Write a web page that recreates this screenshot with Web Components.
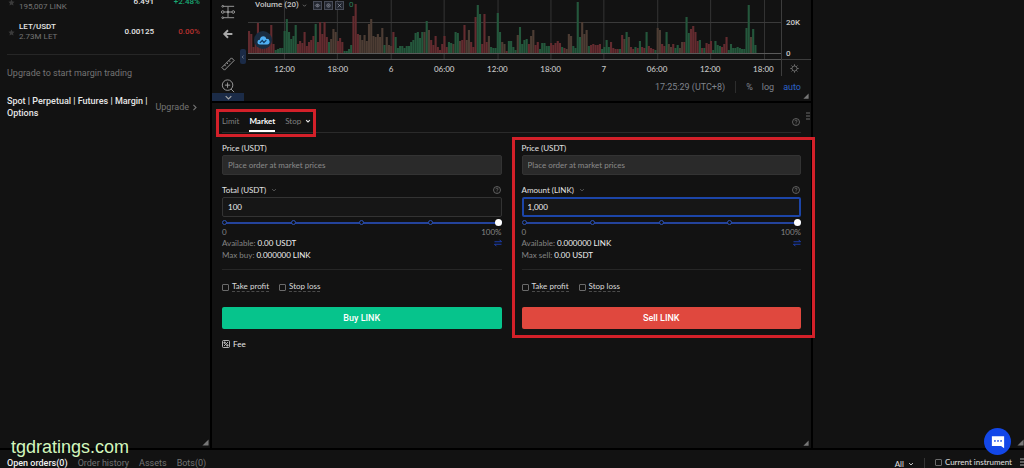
<!DOCTYPE html>
<html lang="en">
<head>
<meta charset="utf-8">
<title>LINK/USDT</title>
<style>
  body { margin: 0; background: #000; color: #e6e6e6; font-family: Roboto, "Liberation Sans", sans-serif; font-size: 8px; line-height: 12px; }
</style>
</head>
<body>
<trade-app></trade-app>
<script>
const define = (name, html, setup) => {
  const template = document.createElement('template');
  template.innerHTML = html;
  customElements.define(name, class extends HTMLElement {
    connectedCallback() {
      if (this.shadowRoot) return;
      const root = this.attachShadow({ mode: 'open' });
      root.append(template.content.cloneNode(true));
      if (setup) setup.call(this, root);
    }
  });
};

const icons = {
  star: '<path d="M8 1l2.200 4.600 5 .6-3.700 3.500 1 5L8 12.300 3.500 14.700l1-5L.8 6.200l5-.6z" fill="currentColor" stroke="none"/>',
  down: '<path d="M3 5.500l5 5 5-5"/>',
  right: '<path d="M5.500 2l6 6-6 6"/>',
  help: '<circle cx="8" cy="8" r="7"/><path d="M5.800 6.500c0-3 4.400-3 4.400-.3 0 1.600-2.200 1.600-2.200 3.300M8 11v1.600"/>',
  swap: '<path d="M1 5.500h14M11 1.500l4 4M15 10.500H1M5 14.500l-4-4"/>',
  fee: '<rect x="1" y="1" width="14" height="14" rx="2"/><path d="M4 4h2.500v2.500H4zM9.500 9.500H12V12H9.500zM12 4L4 12"/>',
  menu: '<path d="M8 2h8M8 8h8M8 14h8"/>',
  eye: '<path d="M1 8c3-6 11-6 14 0-3 6-11 6-14 0z"/><circle cx="8" cy="8" r="2"/>',
  dot: '<circle cx="8" cy="8" r="5.500"/><circle cx="8" cy="8" r="1.500"/>',
  close: '<path d="M2 2l12 12M14 2L2 14"/>',
  range: '<path d="M1 1.500h14M1 14.500h14M3 8h11M8 2v12"/><g fill="#121212"><circle cx="2" cy="8" r="1.500"/><circle cx="14" cy="8" r="1.500"/><circle cx="2" cy="14.500" r="1"/><circle cx="2" cy="1.500" r="1"/></g><circle cx="8" cy="8" r="1"/>',
  back: '<path d="M15 8H3M8 2L2 8l6 6" stroke-width="3"/>',
  ruler: '<path d="M1 12L12 1l3 3L4 15zM4 9l1.500 1.500M6.500 6.500L8 8M9 4l1.500 1.500"/>',
  zoom: '<circle cx="7.500" cy="7" r="6"/><path d="M7.500 4v6M4.500 7h6M11.500 11.500L15 15"/>',
  sun: '<circle cx="8" cy="8" r="4.500"/><path d="M8 .5v3M8 12.500v3M.5 8h3M12.500 8h3M2.700 2.700l2 2M11.300 11.300l2 2M13.300 2.700l-2 2M4.700 11.300l-2 2"/>',
  grip: '<path d="M15 1v14H1z" fill="currentColor" stroke="none"/>',
  cloud: '<path d="M3.500 13a3 3 0 0 1 0-6C4 2 10.500 1.500 11.500 6a3.500 3.500 0 0 1 1 7z" fill="#4fb0f5" stroke="none"/><path d="M3.500 11l3-3 2 2.500 3-3" stroke="#123c63" stroke-width="1.500"/>',
  chat: '<path d="M1 1.500h14V15l-3.500-2.500H1z" fill="#fff" stroke="none"/><g fill="#1347e8" stroke="none"><circle cx="4.500" cy="6.800" r="1"/><circle cx="8" cy="6.800" r="1"/><circle cx="11.500" cy="6.800" r="1"/></g>'
};

define('ui-icon', `
<style>
  :host { display: block; flex: none; width: var(--size, 8px); height: var(--size, 8px); }
  svg { display: block; width: 100%; height: 100%; overflow: visible; fill: none; stroke: currentColor; stroke-width: var(--stroke, 1.500); }
</style><svg viewBox="0 0 16 16" aria-hidden="true"></svg>`, function (root) {
  root.querySelector('svg').innerHTML = icons[this.getAttribute('name')];
});

define('market-row', `
<style>
  :host { display: grid; grid-template-columns: 12px 1fr 56px 46px; align-items: center; padding: 6px 0 4px; line-height: 10px; }
  ui-icon { color: #3a3a3a; --size: 7px; margin-left: 1px; }
  b { display: block; min-height: 10px; font-weight: 500; }
  small { display: block; font-size: 8px; color: #747474; }
  .num { text-align: right; font-weight: 500; }
  .up { color: #19a873; } .down { color: #b8312f; }
</style>
<ui-icon name="star"></ui-icon><div><b></b><small></small></div><span class="num price"></span><span class="num change"></span>`, function (root) {
  root.querySelector('b').textContent = this.getAttribute('pair');
  root.querySelector('small').textContent = this.getAttribute('volume');
  root.querySelector('.price').textContent = this.getAttribute('price');
  const change = root.querySelector('.change');
  change.textContent = this.getAttribute('change');
  change.classList.add(change.textContent[0] === '+' ? 'up' : 'down');
});

define('market-list', `
<style>
  :host { display: block; position: relative; overflow: hidden; background: #121212; padding: 0 10px 0 7px; }
  .rows { margin-top: -14px; border-bottom: 1px solid #262626; padding-bottom: 8px; }
  p { margin: 12px 0 16px; font-size: 9px; color: #747474; }
  .upgrade { display: flex; justify-content: space-between; align-items: center; font-size: 9px; }
  .upgrade b { font-weight: 500; width: 146px; }
  a { display: flex; align-items: center; gap: 2px; color: #747474; text-decoration: none; font-size: 9px; padding-right: 2px; }
  a ui-icon { --size: 7px; --stroke: 2.500; }
  .grip { position: absolute; right: 1px; bottom: 2px; color: #777; --size: 7px; }
</style>
<div class="rows">
  <market-row pair="" volume="195,007 LINK" price="6.491" change="+2.48%"></market-row>
  <market-row pair="LET/USDT" volume="2.73M LET" price="0.00125" change="0.00%"></market-row>
</div>
<p>Upgrade to start margin trading</p>
<div class="upgrade"><b>Spot | Perpetual | Futures | Margin | Options</b><a href="#upgrade">Upgrade <ui-icon name="right"></ui-icon></a></div>
<ui-icon class="grip" name="grip"></ui-icon>`);

const volumes = `r23 r20 r7 r14 r31 r12 r14 r20 r21 r20 r29 r10 g4 g5 g6 g6 g23 g35 g22 g15 g18 g29 r10 r13 r11 r22 r8 r12 r14 r18
g30 r12 r32 r20 r32 r17 g12 m15 m25 m22 r13 r16 r12 g3 g3 g5 g9 r38 r50 r20 m19 m14 m19 m13 m30 m35 m18 m17 m20 m17
m26 g9 m17 m9 m8 r22 g17 g6 g8 g8 g6 g8 g8 g12 g14 g21 g22 g16 g22 m22 g33 m24 r14 r9 r18 r7 r4 r10 r18 r7
g12 g11 m10 g22 g21 m13 r14 r29 m14 m24 r12 r7 r37 g49 g40 r10 r40 r12 m18 g7 g6 g6 g41 g22 m12 m10 r3 g13 g13 g7
g4 m19 g27 g10 g14 g15 r10 m18 m24 r9 r12 g5 g11 g11 g8 g8 r11 r9 r11 r13 r11 g7 r6 m5 m20 m18 g8 g6 g52 g17
m32 m20 m24 g8 r9 r10 r9 r9 r10 g5 g7 g14 g7 r12 r6 r5 r5 g5 r19 m15 g22 m17 r7 r5 g7 r6 g13 r7 r6 g22
r8 r6 r5 g4 m26 m24 r10 r8 g22 m10 m7 r10 g6 g9 m6 m12 r12 g37 g21 r25 r28 r22 r13 g14 r6 g6 r11 r10 r13 g4
g13 g9 g8 r7 r10 r17 g4 g10 g6 g6 g7 g6 g5 g5 g26 g49 m17 g25 g9`.split(/\s+/);

define('volume-chart', `
<style>
  :host { display: grid; grid-template-columns: 32px 1fr; position: relative; background: #121212; height: 101px; overflow: hidden; }
  .tools { display: flex; flex-direction: column; align-items: center; color: #a8a8a8; padding-top: 5px; }
  button { all: unset; box-sizing: border-box; display: grid; place-items: center; }
  .tools button { width: 100%; height: 14px; --size: 14px; --stroke: 1; }
  .tools .back { height: 30px; --size: 10px; }
  .tools .ruler { height: 30px; }
  .tools .more { background: #1b2b47; height: 9px; margin-top: auto; --size: 9px; --stroke: 2; }
  .fold { position: absolute; left: 28px; top: 49px; width: 6px; height: 15px; border-radius: 2px; background: #1b2b47; --size: 4px; }
  .fold ui-icon { rotate: 180deg; }
  .main { display: grid; grid-template: 60px 16px 1fr / 1fr 30px; padding-left: 4px; position: relative; min-width: 0; }
  .plot { width: 100%; height: 60px; display: block; }
  .legend { position: absolute; left: 11px; top: -1px; display: flex; align-items: center; gap: 2px; color: #c4c4c4; }
  .legend button { width: 9px; height: 9px; background: #22262f; border: 1px solid #484c57; color: #9da1ad; --size: 5px; --stroke: 2; }
  .legend .name { display: flex; gap: 3px; align-items: center; margin-right: 4px; --size: 5px; font-weight: 500; }
  .legend output { color: #2f7d5b; margin-left: 3px; }
  .cloud { position: absolute; left: 10px; top: 31px; width: 18px; height: 18px; border-radius: 50%; background: #1a2c40; --size: 13px; }
  .axis { border-left: 1px solid #3d3d3d; border-bottom: 1px solid #3d3d3d; box-sizing: border-box; font-size: 8px; color: #c8c8c8; padding: 17px 0 0 4px; font-weight: 500; }
  .axis div { height: 31px; }
  .times { display: grid; grid-template-columns: repeat(10, 1fr); margin: 3px -9px 0 10px; text-align: center; color: #c8c8c8; font-weight: 500; font-family: Lato, sans-serif; }
  .gear { border-left: 1px solid #3d3d3d; color: #777; --size: 9px; padding-right: 4px; }
  .foot { grid-column: 1 / -1; display: flex; justify-content: flex-end; align-items: center; font-size: 9px; color: #7f838c; padding: 0 10px 4px 0; }
  .foot .sep { width: 1px; height: 12px; background: #2d2d2d; margin: 0 10px; }
  .foot button { margin-left: 9px; } .foot .sep + button { margin-left: 0; } .foot .on { color: #2c62c9; }
  .grip { position: absolute; right: 2px; bottom: 2px; color: #777; --size: 6px; }
</style>
<div class="tools">
  <button aria-label="Price range"><ui-icon name="range"></ui-icon></button>
  <button class="back" aria-label="Back"><ui-icon name="back"></ui-icon></button>
  <button class="ruler" aria-label="Measure"><ui-icon name="ruler"></ui-icon></button>
  <button aria-label="Zoom in"><ui-icon name="zoom"></ui-icon></button>
  <button class="more" aria-label="More tools"><ui-icon name="down"></ui-icon></button>
</div>
<div class="main">
  <svg class="plot" viewBox="0 0 534 60" preserveAspectRatio="none" aria-label="Volume"></svg>
  <div class="axis"><div>20K</div><div>0</div></div>
  <div class="times"></div>
  <button class="gear" aria-label="Settings"><ui-icon name="sun"></ui-icon></button>
  <div class="foot"><time>17:25:29 (UTC+8)</time><span class="sep"></span><button>%</button><button>log</button><button class="on">auto</button></div>
  <div class="legend"><span class="name">Volume (20) <ui-icon name="down"></ui-icon></span>
    <button aria-label="Hide"><ui-icon name="eye"></ui-icon></button><button aria-label="Options"><ui-icon name="dot"></ui-icon></button><button aria-label="Remove"><ui-icon name="close"></ui-icon></button><output>0</output></div>
  <button class="cloud" aria-label="Cloud"><ui-icon name="cloud"></ui-icon></button>
</div>
<button class="fold" aria-label="Fold"><ui-icon name="right"></ui-icon></button>
<ui-icon class="grip" name="grip"></ui-icon>`, function (root) {
  const step = 534 / 240, colors = { r: '#632b2f', g: '#24573c', m: '#4d3d34' };
  let svg = '';
  for (let i = 0; i < 10; i++) svg += `<rect x="${Math.round(36 + i * 53.4)}" width="1" height="60" fill="#343434"/>`;
  svg += '<rect y="22" width="534" height="1" fill="#3a3a3a"/>';
  volumes.forEach((v, i) => { const h = +v.slice(1); svg += `<rect x="${i * step}" y="${54 - h}" width="${step - .1}" height="${h}" fill="${colors[v[0]]}"/>`; });
  svg += '<rect y="53" width="534" height="1" fill="#5a5a5a"/><rect y="59" width="534" height="1" fill="#555"/>';
  root.querySelector('.plot').innerHTML = svg;
  root.querySelector('.times').innerHTML = ['12:00', '18:00', '6', '06:00', '12:00', '18:00', '7', '06:00', '12:00', '18:00'].map(t => `<span>${t}</span>`).join('');
});

define('check-box', `
<style>
  :host { display: block; }
  label { display: flex; align-items: center; gap: 3px; }
  input { appearance: none; margin: 0; width: 7px; height: 7px; border: 1px solid #6a6a6a; border-radius: 1px; }
  span { line-height: 9px; border-bottom: 1px var(--underline, dashed #4a4a4a); }
</style>
<label><input type="checkbox"><span><slot></slot></span></label>`);

define('order-side', `
<style>
  :host { display: block; position: relative; min-width: 0; }
  :host([marked])::after { content: ""; position: absolute; inset: -5px -14px -9px -10px; border: 3px solid #d32029; pointer-events: none; }
  .head { display: flex; justify-content: space-between; align-items: center; height: 12px; margin-bottom: 1px; padding-right: 1px; color: #777; }
  label { color: #e2e2e2; display: flex; align-items: center; gap: 5px; --size: 6px; }
  label ui-icon { color: #888; }
  input { font: inherit; }
  input[type=text] { box-sizing: border-box; display: block; width: 100%; height: 20px; padding: 0 5px; border: 1px solid #333; border-radius: 2px; background: #161616; color: #f0f0f0; outline: 0; }
  input:disabled { background: #2a2a2a; border-color: #333; }
  input::placeholder { color: #8a8a8a; opacity: 1; }
  :host([marked]) .amount { border: 2px solid #1c45a8; padding: 0 4px; }
  .price { margin-bottom: 9px; }
  .slider { display: grid; align-items: center; height: 9px; margin-top: 1px; }
  .slider > * { grid-area: 1 / 1; }
  .track { height: 2px; background: #24439c; margin: 0 3px; }
  .stops { display: flex; justify-content: space-between; }
  .stops i { width: 3px; height: 3px; border: 1px solid #2c52b5; border-radius: 50%; background: #121212; }
  input[type=range] { appearance: none; width: 100%; height: 7px; margin: 0; background: none; }
  input[type=range]::-webkit-slider-thumb { appearance: none; width: 7px; height: 7px; border-radius: 50%; background: #fff; }
  .line { display: flex; justify-content: space-between; align-items: center; color: #858585; }
  .scale { height: 11px; margin-top: -1px; }
  .line b { font-weight: 400; color: #f0f0f0; }
  .line ui-icon { color: #1f4be0; }
  .ticks { display: flex; gap: 10px; margin: 8px 0 14px; padding-top: 11px; border-top: 1px solid #262626; color: #dcdcdc; height: 12px; align-items: center; }
  button { all: unset; display: block; width: 100%; height: 22px; border-radius: 2px; text-align: center; color: #fff; font-family: Roboto, sans-serif; font-weight: 500; font-size: 9px; line-height: 22px; background: var(--action); }
</style>
<div class="head"><label for="price">Price (USDT)</label></div>
<input type="text" id="price" class="price" placeholder="Place order at market prices" disabled>
<div class="head"><label for="amount"><span class="unit"></span><ui-icon name="down"></ui-icon></label><ui-icon name="help"></ui-icon></div>
<input type="text" id="amount" class="amount">
<div class="slider"><div class="track"></div><div class="stops"><i></i><i></i><i></i><i></i><i></i></div><input type="range" min="0" max="100" value="100" aria-label="Share of balance"></div>
<div class="line scale"><span>0</span><span>100%</span></div>
<div class="line"><span>Available: <b class="available"></b></span><ui-icon name="swap"></ui-icon></div>
<div class="line"><span><span class="cap"></span> <b class="max"></b></span></div>
<div class="ticks"><check-box>Take profit</check-box><check-box>Stop loss</check-box></div>
<button><slot></slot></button>`, function (root) {
  for (const name of ['unit', 'available', 'cap', 'max']) root.querySelector('.' + name).textContent = this.getAttribute(name);
  root.querySelector('#amount').value = this.getAttribute('value');
});

define('order-form', `
<style>
  :host { display: block; position: relative; z-index: 1; background: #121212; padding: 0 10px; font-family: Lato, sans-serif; }
  header { display: flex; align-items: center; justify-content: space-between; height: 29px; border-bottom: 1px solid #2a2a2a; color: #777; margin-bottom: 9px; padding-right: 1px; }
  nav { position: relative; display: flex; gap: 10px; height: 29px; align-self: flex-start; }
  nav::after { content: ""; position: absolute; inset: 6px -5px -5px -6px; border: 3px solid #d32029; pointer-events: none; }
  a { display: flex; align-items: center; gap: 4px; box-sizing: border-box; padding-top: 9px; color: #808080; text-decoration: none; border-bottom: 2px solid transparent; --size: 6px; --stroke: 3; }
  a ui-icon { color: #e6e6e6; }
  header > ui-icon { margin-top: 9px; }
  a.on { color: #fff; font-weight: 700; border-color: #fff; }
  .sides { display: grid; grid-template-columns: 1fr 1fr; gap: 20px; }
  .fee { display: flex; align-items: center; gap: 3px; margin-top: 9px; }
  .menu { position: absolute; right: 1px; top: 9px; color: #8a8a8a; }
  .grip { position: absolute; right: 2px; bottom: 2px; color: #777; --size: 6px; }
</style>
<header><nav><a href="#limit">Limit</a><a href="#market" class="on">Market</a><a href="#stop">Stop <ui-icon name="down"></ui-icon></a></nav><ui-icon name="help"></ui-icon></header>
<div class="sides">
  <order-side unit="Total (USDT)" value="100" available="0.00 USDT" cap="Max buy:" max="0.000000 LINK" style="--action:#06c48c">Buy LINK</order-side>
  <order-side marked unit="Amount (LINK)" value="1,000" available="0.000000 LINK" cap="Max sell:" max="0.00 USDT" style="--action:#e0483e">Sell LINK</order-side>
</div>
<div class="fee"><ui-icon name="fee"></ui-icon>Fee</div>
<ui-icon class="menu" name="menu"></ui-icon>
<ui-icon class="grip" name="grip"></ui-icon>`);

define('orders-bar', `
<style>
  :host { display: flex; justify-content: space-between; background: #121212; height: 18px; overflow: hidden; font-size: 9px; color: #747474; padding-left: 7px; box-sizing: border-box; }
  nav, .right { display: flex; padding-top: 7px; gap: 10px; }
  a { color: inherit; text-decoration: none; }
  a.on { color: #f0f0f0; font-weight: 500; }
  .right { color: #e0e0e0; font-family: Lato, sans-serif; font-size: 8px; align-items: flex-start; padding-top: 8px; --underline: none; }
  button { all: unset; display: flex; align-items: center; gap: 4px; --size: 6px; --stroke: 2.500; }
  .sep { width: 1px; height: 10px; background: #333; }
  .right > ui-icon { margin: 0 0 0 -6px; }
</style>
<nav><a href="#open" class="on">Open orders(0)</a><a href="#history">Order history</a><a href="#assets">Assets</a><a href="#bots">Bots(0)</a></nav>
<div class="right"><button>All <ui-icon name="down"></ui-icon></button><span class="sep"></span><check-box>Current instrument</check-box><ui-icon name="menu"></ui-icon></div>`);

define('trade-app', `
<style>
  :host { display: grid; grid-template-rows: 1fr auto; gap: 2px; min-height: 100vh; position: relative; overflow: hidden; }
  main { display: grid; grid-template-columns: 210fr 599fr 211fr; gap: 2px; }
  .centre { display: grid; grid-template-rows: auto 1fr; gap: 2px; min-width: 0; position: relative; z-index: 1; }
  aside { background: #121212; position: relative; }
  aside ui-icon { position: absolute; right: 0; bottom: 2px; color: #777; --size: 7px; }
  .chat { all: unset; position: absolute; right: 13px; bottom: 13px; width: 27px; height: 27px; border-radius: 50%; background: #1347e8; display: grid; place-items: center; --size: 14px; }
  .site { position: absolute; left: 11px; bottom: 11px; font: 18px/20px "Liberation Sans", sans-serif; color: #d2f7bd; }
</style>
<main><market-list></market-list><div class="centre"><volume-chart></volume-chart><order-form></order-form></div><aside><ui-icon name="grip"></ui-icon></aside></main>
<orders-bar></orders-bar>
<button class="chat" aria-label="Chat"><ui-icon name="chat"></ui-icon></button>
<div class="site">tgdratings.com</div>`);
</script>
</body>
</html>
